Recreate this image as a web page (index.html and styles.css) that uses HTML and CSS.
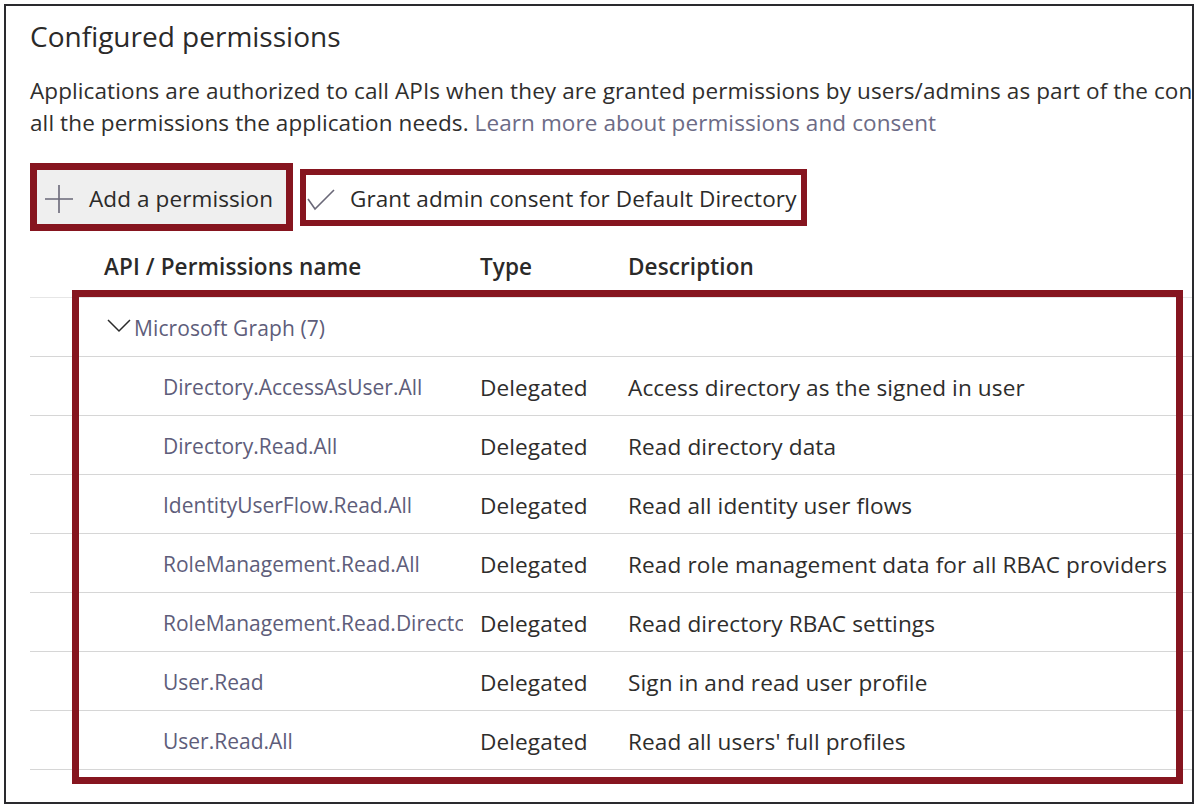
FILE: index.html
```html
<!DOCTYPE html>
<html lang="en">
<head>
<meta charset="utf-8">
<title>Configured permissions</title>
<link rel="stylesheet" href="styles.css">
</head>
<body>
<div class="frame">
  <h1 class="title">Configured permissions</h1>
  <p class="desc">
    <span class="line">Applications are authorized to call APIs when they are granted permissions by users/admins as part of the consent process. The list of configured permissions should include</span>
    <span class="line">all the permissions the application needs. <a class="link" href="#">Learn more about permissions and consent</a></span>
  </p>
  <div class="toolbar">
    <button class="btn btn-add">
      <svg class="ico" width="30" height="30" viewBox="0 0 30 30"><path d="M15 1V29M1 15H29" stroke="#6a6878" stroke-width="1.6" fill="none"/></svg>
      <span>Add a permission</span>
    </button>
    <button class="btn btn-grant">
      <svg class="ico" width="28" height="22" viewBox="0 0 28 22"><path d="M1 10L8 20L27 1" stroke="#6a6878" stroke-width="1.6" fill="none"/></svg>
      <span>Grant admin consent for Default Directory</span>
    </button>
  </div>
  <div class="table">
    <div class="row head">
      <div class="c-name">API / Permissions name</div>
      <div class="c-type">Type</div>
      <div class="c-desc">Description</div>
    </div>
    <div class="row group">
      <svg class="chev" width="24" height="14" viewBox="0 0 24 14"><path d="M1 1L12 12L23 1" stroke="#2b2b2b" stroke-width="1.5" fill="none"/></svg>
      <span>Microsoft Graph (7)</span>
    </div>
    <div class="row item">
      <div class="c-name">Directory.AccessAsUser.All</div>
      <div class="c-type">Delegated</div>
      <div class="c-desc">Access directory as the signed in user</div>
    </div>
    <div class="row item">
      <div class="c-name">Directory.Read.All</div>
      <div class="c-type">Delegated</div>
      <div class="c-desc">Read directory data</div>
    </div>
    <div class="row item">
      <div class="c-name">IdentityUserFlow.Read.All</div>
      <div class="c-type">Delegated</div>
      <div class="c-desc">Read all identity user flows</div>
    </div>
    <div class="row item">
      <div class="c-name">RoleManagement.Read.All</div>
      <div class="c-type">Delegated</div>
      <div class="c-desc">Read role management data for all RBAC providers</div>
    </div>
    <div class="row item">
      <div class="c-name">RoleManagement.Read.Directory</div>
      <div class="c-type">Delegated</div>
      <div class="c-desc">Read directory RBAC settings</div>
    </div>
    <div class="row item">
      <div class="c-name">User.Read</div>
      <div class="c-type">Delegated</div>
      <div class="c-desc">Sign in and read user profile</div>
    </div>
    <div class="row item">
      <div class="c-name">User.Read.All</div>
      <div class="c-type">Delegated</div>
      <div class="c-desc">Read all users' full profiles</div>
    </div>
    <div class="annot"></div>
  </div>
</div>
</body>
</html>
```

FILE: styles.css
```css
* { box-sizing: border-box; }
html, body { margin: 0; padding: 0; background: #ffffff; }
body {
  font-family: "Open Sans", "Noto Sans", "Liberation Sans", sans-serif;
  color: #2e2d2c;
}
.frame {
  margin: 4px;
  width: 1190px;
  height: 800px;
  border: 2px solid #2a2a2e;
  overflow: hidden;
  padding-left: 24px;
  padding-top: 12px;
}
.title {
  margin: 0;
  font-weight: 400;
  font-size: 28px;
  line-height: 36px;
  letter-spacing: 0;
  color: #2b2a29;
}
.desc {
  margin: 21px 0 0;
  font-size: 22.5px;
  line-height: 32px;
  letter-spacing: 0.1px;
  color: #2f2e2d;
}
.line { display: block; white-space: nowrap; }
.link { color: #6c6b86; text-decoration: none; }
.toolbar {
  display: flex;
  align-items: center;
  gap: 7px;
  margin-top: 24px;
}
.btn {
  display: flex;
  align-items: center;
  font-family: inherit;
  font-size: 22.5px;
  letter-spacing: 0.1px;
  color: #2b2a29;
  border-style: solid;
  border-color: #86151f;
  padding: 3px 0 0;
  margin: 0;
}
.btn-add {
  width: 263px;
  height: 68px;
  border-width: 7px;
  background: #efefef;
  padding-left: 7px;
  gap: 15px;
}
.btn-grant {
  width: 507px;
  height: 57px;
  border-width: 6px;
  background: #ffffff;
  padding-left: 1px;
  gap: 15px;
}
.btn-grant .ico { margin-top: 2px; }
.table {
  position: relative;
  margin-top: 6px;
}
.row {
  display: flex;
  align-items: center;
  height: 59px;
  border-bottom: 1px solid #d6d6d6;
  font-size: 22.6px;
  letter-spacing: 0.1px;
  white-space: nowrap;
  padding-top: 2px;
}
.row.head {
  height: 61px;
  padding-top: 0;
  padding-bottom: 2px;
  padding-left: 74px;
  font-weight: 600;
  font-size: 22.5px;
  color: #2b2a29;
  border-bottom-color: #e6e6e6;
}
.head .c-name { width: 376px; }
.c-type { width: 148px; }
.c-desc { flex: 1; }
.row.group {
  padding-left: 77px;
  color: #5e5d7a;
  font-size: 21px;
  letter-spacing: 0.1px;
}
.chev { margin-right: 3px; margin-top: -4px; }
.row.item { padding-left: 133px; }
.item .c-name {
  width: 300px;
  margin-right: 17px;
  overflow: hidden;
  color: #5e5d7a;
  font-size: 21px;
  letter-spacing: 0;
}
.item .c-type, .item .c-desc { color: #2e2d2c; }
.annot {
  position: absolute;
  left: 42px;
  top: 53px;
  width: 1111px;
  height: 494px;
  border: 7px solid #86151f;
  pointer-events: none;
}
```
